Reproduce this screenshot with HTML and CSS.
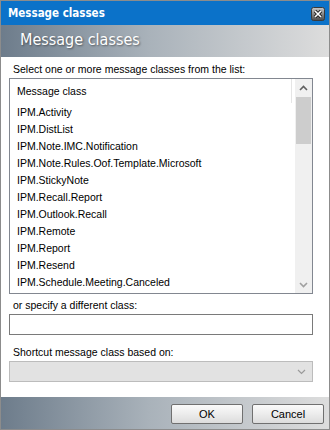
FILE: index.html
```html
<!DOCTYPE html>
<html lang="en">
<head>
    <meta charset="UTF-8">
    <title>Message classes</title>
    <link rel="stylesheet" href="styles.css">
</head>
<body>
    <div class="window">
        <div class="titlebar">
            <span class="title">Message classes</span>
            <span class="close-btn">
                <svg width="14" height="14" viewBox="0 0 14 14">
                    <defs>
                        <linearGradient id="cg" x1="0" y1="0" x2="0" y2="1">
                            <stop offset="0" stop-color="#c8c8c8"/>
                            <stop offset="1" stop-color="#4a4a4a"/>
                        </linearGradient>
                    </defs>
                    <rect x="0.5" y="0.5" width="13" height="13" rx="2" fill="url(#cg)" stroke="#3a3a3a"/>
                    <path d="M4 4 L10 10 M10 4 L4 10" stroke="#1e1e1e" stroke-width="3.2"/>
                    <path d="M4 4 L10 10 M10 4 L4 10" stroke="#ffffff" stroke-width="1.6"/>
                </svg>
            </span>
        </div>
        <div class="banner">Message classes</div>

        <div class="content">
            <div class="field-label">Select one or more message classes from the list:</div>
            <div class="listbox">
                <div class="list-area">
                    <div class="list-header"><span>Message class</span></div>
                    <div class="list-item">IPM.Activity</div>
                    <div class="list-item">IPM.DistList</div>
                    <div class="list-item">IPM.Note.IMC.Notification</div>
                    <div class="list-item">IPM.Note.Rules.Oof.Template.Microsoft</div>
                    <div class="list-item">IPM.StickyNote</div>
                    <div class="list-item">IPM.Recall.Report</div>
                    <div class="list-item">IPM.Outlook.Recall</div>
                    <div class="list-item">IPM.Remote</div>
                    <div class="list-item">IPM.Report</div>
                    <div class="list-item">IPM.Resend</div>
                    <div class="list-item">IPM.Schedule.Meeting.Canceled</div>
                </div>
                <div class="scrollbar">
                    <div class="scroll-arrow">
                        <svg width="9" height="6" viewBox="0 0 9 6"><path d="M1 5 L4.5 1.5 L8 5" fill="none" stroke="#606060" stroke-width="1.6"/></svg>
                    </div>
                    <div class="scroll-thumb"></div>
                    <div class="scroll-track"></div>
                    <div class="scroll-arrow">
                        <svg width="9" height="6" viewBox="0 0 9 6"><path d="M1 1 L4.5 4.5 L8 1" fill="none" stroke="#a0a0a0" stroke-width="1.6"/></svg>
                    </div>
                </div>
            </div>

            <div class="field-label spaced">or specify a different class:</div>
            <div class="text-input"></div>

            <div class="field-label spaced-lg">Shortcut message class based on:</div>
            <div class="dropdown">
                <svg width="9" height="6" viewBox="0 0 9 6"><path d="M1 1 L4.5 4.5 L8 1" fill="none" stroke="#9a9a9a" stroke-width="1.2"/></svg>
            </div>
        </div>

        <div class="footer">
            <button class="btn">OK</button>
            <button class="btn">Cancel</button>
        </div>
    </div>
</body>
</html>
```

FILE: styles.css
```css
body {
    margin: 0;
    padding: 0;
    background-color: #ffffff;
    font-family: 'Liberation Sans', Arial, sans-serif;
    font-size: 10.5px;
    color: #000;
}
.window {
    width: 330px;
    height: 430px;
    box-sizing: border-box;
    border: 1px solid #8c8c8c;
    display: flex;
    flex-direction: column;
    background-color: #fff;
}
.titlebar {
    height: 24px;
    background-color: #0b72c9;
    display: flex;
    align-items: center;
    justify-content: space-between;
    padding: 0 4px 0 7px;
}
.title {
    color: #fff;
    font-family: 'DejaVu Sans Condensed', 'DejaVu Sans', sans-serif;
    font-weight: bold;
    font-size: 11.5px;
}
.close-btn {
    display: flex;
    margin-top: 2px;
}
.banner {
    height: 32px;
    background: linear-gradient(to right, #6d7c8b 0%, #a9b2ba 45%, #dddddd 100%);
    color: #fff;
    font-family: 'DejaVu Sans Condensed', 'DejaVu Sans', sans-serif;
    font-size: 16px;
    line-height: 30px;
    padding-left: 19px;
    text-shadow: 1px 1px 2px rgba(0, 0, 0, 0.45);
}
.content {
    padding: 5px 16px 0 8px;
    display: flex;
    flex-direction: column;
}
.field-label {
    line-height: 14px;
    padding-left: 4px;
    margin-bottom: 2px;
}
.spaced {
    margin-top: 4px;
}
.spaced-lg {
    margin-top: 10px;
}
.listbox {
    height: 216px;
    box-sizing: border-box;
    border: 1px solid #828790;
    display: flex;
}
.list-area {
    flex: 1;
    overflow: hidden;
}
.list-header {
    height: 24px;
    line-height: 24px;
    padding-left: 7px;
    margin-right: 3px;
    border-right: 1px solid #e5e5e5;
    margin-bottom: 1px;
}
.list-item {
    line-height: 17px;
    padding-left: 7px;
    white-space: nowrap;
}
.scrollbar {
    width: 17px;
    background-color: #f0f0f0;
    display: flex;
    flex-direction: column;
}
.scroll-arrow {
    height: 17px;
    display: flex;
    align-items: center;
    justify-content: center;
}
.scroll-thumb {
    height: 47px;
    margin: 1px 1px 0 1px;
    background-color: #cdcdcd;
}
.scroll-track {
    flex: 1;
}
.text-input {
    height: 21px;
    box-sizing: border-box;
    border: 1px solid #7a7a7a;
}
.dropdown {
    height: 21px;
    box-sizing: border-box;
    border: 1px solid #bcbcbc;
    background-color: #e2e2e2;
    display: flex;
    align-items: center;
    justify-content: flex-end;
    padding-right: 6px;
}
.footer {
    margin-top: auto;
    height: 32px;
    background: linear-gradient(to right, #6d7c8b 0%, #a9b2ba 45%, #dddddd 100%);
    display: flex;
    align-items: center;
    justify-content: flex-end;
    gap: 9px;
    padding-right: 5px;
}
.btn {
    width: 72px;
    height: 20px;
    margin-top: 1px;
    border: 1px solid #707070;
    border-radius: 2px;
    background: linear-gradient(to bottom, #fafafa 0%, #ececec 50%, #dcdcdc 100%);
    font-family: inherit;
    font-size: 11px;
    color: #000;
    padding: 0;
}
```
